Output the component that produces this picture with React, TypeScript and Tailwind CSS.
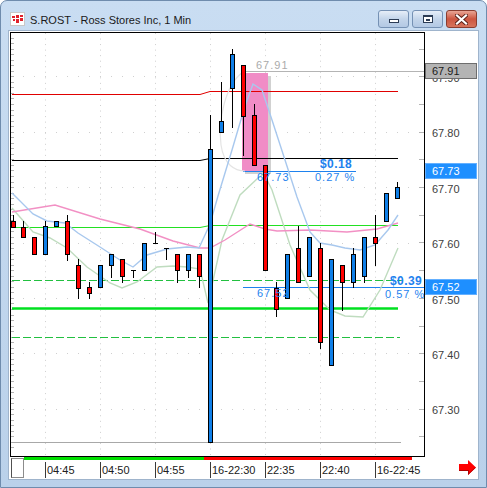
import React from "react";

const FONT = { fontFamily: '"Liberation Sans", Arial, sans-serif' };

// price -> y in page coordinates (scale read off the axis)
const py = (p: number) => 131.7 + (67.8 - p) * 554;

type Candle = { x: number; top: number; bot: number; wt?: number; wb?: number; c: "r" | "b" | "d" };

const candles: Candle[] = [
  { x: 11, top: 221, bot: 227, wt: 215, c: "r" },
  { x: 21, top: 227, bot: 237, wt: 221, c: "r" },
  { x: 32, top: 237, bot: 254, c: "r" },
  { x: 43, top: 226, bot: 254, wt: 221, c: "b" },
  { x: 54, top: 221, bot: 226, c: "b" },
  { x: 65, top: 221, bot: 254, wt: 215, wb: 260, c: "r" },
  { x: 76, top: 265, bot: 288, wt: 259, wb: 298, c: "r" },
  { x: 87, top: 287, bot: 293, wt: 282, wb: 298, c: "r" },
  { x: 98, top: 265, bot: 287, c: "b" },
  { x: 109, top: 254, bot: 265, wb: 277, c: "b" },
  { x: 120, top: 259, bot: 276, wb: 282, c: "r" },
  { x: 131, top: 270, bot: 270, wb: 277, c: "d" },
  { x: 142, top: 243, bot: 270, c: "b" },
  { x: 153, top: 243, bot: 243, wt: 232, c: "d" },
  { x: 164, top: 248, bot: 248, wb: 259, c: "d" },
  { x: 175, top: 254, bot: 270, wb: 282, c: "r" },
  { x: 186, top: 254, bot: 270, wb: 277, c: "b" },
  { x: 197, top: 254, bot: 276, wb: 287, c: "r" },
  { x: 208, top: 149, bot: 442, wt: 115, c: "b" },
  { x: 219, top: 121, bot: 132, wt: 82, c: "b" },
  { x: 230, top: 54, bot: 88, wt: 49, wb: 127, c: "b" },
  { x: 241, top: 65, bot: 116, wb: 155, c: "r" },
  { x: 252, top: 115, bot: 165, wt: 104, c: "r" },
  { x: 263, top: 165, bot: 270, c: "r" },
  { x: 274, top: 288, bot: 309, wt: 282, wb: 316, c: "r" },
  { x: 285, top: 254, bot: 298, c: "b" },
  { x: 296, top: 248, bot: 282, wt: 226, c: "r" },
  { x: 307, top: 237, bot: 276, c: "b" },
  { x: 318, top: 248, bot: 342, wt: 243, wb: 348, c: "r" },
  { x: 329, top: 259, bot: 365, c: "b" },
  { x: 340, top: 265, bot: 282, wb: 310, c: "r" },
  { x: 351, top: 254, bot: 282, wt: 248, wb: 287, c: "b" },
  { x: 362, top: 237, bot: 276, wb: 282, c: "b" },
  { x: 373, top: 237, bot: 243, wt: 215, wb: 265, c: "r" },
  { x: 384, top: 193, bot: 221, c: "b" },
  { x: 395, top: 187, bot: 198, wt: 182, c: "b" },
];

const lightBlue = [
  [12, 193], [33, 214], [47, 221], [65, 223], [78, 233], [100, 247], [120, 260], [133, 267],
  [147, 255], [167, 249], [187, 247], [199, 248], [210, 224], [218, 196], [232, 150], [245, 106],
  [253, 84], [262, 90], [272, 120], [285, 160], [297, 197], [310, 232], [320, 243], [332, 245],
  [345, 248], [360, 250], [375, 245], [388, 230], [398, 215],
];
const pink = [
  [12, 212], [55, 205], [100, 219], [140, 229], [173, 241], [200, 248], [210, 248], [225, 240],
  [250, 224], [265, 229], [277, 231], [310, 230], [347, 232], [377, 229], [398, 223],
];
const lightGreen = [
  [12, 208], [33, 232], [50, 238], [67, 248], [87, 267], [110, 283], [122, 288], [137, 282],
  [157, 267], [173, 266], [187, 267], [200, 269], [208, 303], [222, 240], [240, 195], [258, 178],
  [264, 174], [272, 190], [290, 245], [310, 290], [330, 310], [345, 316], [363, 317], [380, 290],
  [398, 248],
];

const pts = (a: number[][]) => a.map((p) => p.join(",")).join(" ");

const gridX = [45, 100, 155, 210, 265, 320, 375];
const gridY = [67.9, 67.8, 67.7, 67.6, 67.5, 67.4, 67.3].map(py);

function Chart() {
  const minor: number[] = [];
  for (let p = 67.99; p > 67.22; p -= 0.01) minor.push(py(p));
  const major: number[] = [];
  for (let p = 67.95; p > 67.22; p -= 0.05) major.push(py(p));

  return (
    <svg width={413} height={423} viewBox="11 33 413 423" className="block" style={FONT}>
      {/* dotted grid */}
      {gridX.map((x) => (
        <line key={x} x1={x + 0.5} x2={x + 0.5} y1={33} y2={455} stroke="#cfcfcf" strokeDasharray="1 4.54" />
      ))}
      {gridY.map((y) => (
        <line key={y} x1={12} x2={418} y1={Math.round(y) + 0.5} y2={Math.round(y) + 0.5} stroke="#cfcfcf" strokeDasharray="1 10" />
      ))}
      {minor.map((y) => (
        <line key={y} x1={11} x2={14} y1={Math.round(y) + 0.5} y2={Math.round(y) + 0.5} stroke="#b4b4b4" />
      ))}
      {major.map((y) => (
        <line key={y} x1={419} x2={424} y1={Math.round(y) + 0.5} y2={Math.round(y) + 0.5} stroke="#b4b4b4" />
      ))}

      {/* highlight box */}
      <rect x={245} y={76} width={26} height={98} fill="#000" opacity={0.18} />
      <rect x={242} y={73} width={26} height={98} fill="#f08cc6" />

      {/* level lines */}
      <polyline points="12,94.5 200,94.5 210,91.5 398,91.5" fill="none" stroke="#e00000" />
      <polyline points="12,160.5 200,160.5 210,158.5 398,158.5" fill="none" stroke="#000" />
      <polyline points="12,227.5 200,227.5 210,225.5 398,225.5" fill="none" stroke="#22e022" />
      <line x1={12} x2={402} y1={280.5} y2={280.5} stroke="#22c040" strokeDasharray="8 3" />
      <line x1={12} x2={398} y1={308.5} y2={308.5} stroke="#00e020" strokeWidth={2.5} />
      <line x1={12} x2={400} y1={337.5} y2={337.5} stroke="#22c040" strokeDasharray="8 3" />
      <line x1={12} x2={401} y1={442.5} y2={442.5} stroke="#a8a8a8" />
      <line x1={243} x2={424} y1={71.5} y2={71.5} stroke="#b4b4b4" />
      <line x1={243} x2={356} y1={171.5} y2={171.5} stroke="#1e82ee" />
      <line x1={243} x2={424} y1={287.5} y2={287.5} stroke="#1e82ee" />

      {/* moving averages */}
      <path d="M243,72 C225,85 218,120 221,145 C224,165 235,171 245,171" fill="none" stroke="#e4e4e4" strokeWidth={1.2} />
      <polyline points={pts(lightGreen)} fill="none" stroke="#bfdcbf" strokeWidth={1.4} />
      <polyline points={pts(pink)} fill="none" stroke="#f290c4" strokeWidth={1.4} />
      <polyline points={pts(lightBlue)} fill="none" stroke="#a8c8ee" strokeWidth={1.4} />

      {/* candles */}
      {candles.map((k) => {
        const cx = k.x + 2.5;
        const wt = k.wt ?? k.top;
        const wb = k.wb ?? k.bot;
        if (k.c === "d") {
          return (
            <g key={k.x} stroke="#000">
              <line x1={cx} x2={cx} y1={wt} y2={wb + 1} />
              <line x1={k.x} x2={k.x + 5} y1={k.top + 0.5} y2={k.top + 0.5} />
            </g>
          );
        }
        return (
          <g key={k.x}>
            <line x1={cx} x2={cx} y1={wt} y2={wb + 1} stroke="#000" />
            <rect
              x={k.x + 0.5}
              y={k.top + 0.5}
              width={4}
              height={k.bot - k.top}
              fill={k.c === "r" ? "#ff0000" : "#0f7fe8"}
              stroke="#000"
            />
          </g>
        );
      })}

      {/* annotations */}
      <text x={256} y={69} fontSize={11} fill="#ababab" letterSpacing={1}>67.91</text>
      <text x={320} y={168} fontSize={12} fontWeight={700} fill="#1e82ee" letterSpacing={0.4}>$0.18</text>
      <text x={257} y={181} fontSize={11} fill="#1e82ee" letterSpacing={1}>67.73</text>
      <text x={315} y={181} fontSize={11} fill="#1e82ee" letterSpacing={1}>0.27 %</text>
      <text x={257} y={297} fontSize={11} fill="#1e82ee" letterSpacing={1}>67.52</text>
      <text x={390} y={285} fontSize={12} fontWeight={700} fill="#1e82ee" letterSpacing={0.4}>$0.39</text>
      <text x={385} y={298} fontSize={11} fill="#1e82ee" letterSpacing={1}>0.57 %</text>
    </svg>
  );
}

function PriceAxis() {
  const labels = ["67.90", "67.80", "67.70", "67.60", "67.50", "67.40", "67.30"];
  const tags = [
    { t: "67.91", top: "top-[31px]", cls: "bg-[#b4b4b4] border-[#6e6e6e] text-[#1a1a1a]" },
    { t: "67.73", top: "top-[131px]", cls: "bg-[#1e8fff] border-[#64b0ff] text-white" },
    { t: "67.52", top: "top-[247px]", cls: "bg-[#1e8fff] border-[#64b0ff] text-white" },
  ];
  return (
    <div className="relative w-[53px] h-[425px] overflow-hidden text-[11px] text-[#404040]" style={FONT}>
      <div className="flex flex-col pt-[39px] pl-[7px]">
        {labels.map((l) => (
          <div key={l} className="h-[55.4px] leading-[14px] shrink-0">{l}</div>
        ))}
      </div>
      {tags.map((g) => (
        <div
          key={g.t}
          className={`absolute left-0 w-[52px] h-[16px] border pl-[6px] leading-[14px] ${g.top} ${g.cls}`}
        >
          {g.t}
        </div>
      ))}
    </div>
  );
}

function TimeAxis() {
  const labels = ["04:45", "04:50", "04:55", "16-22:30", "22:35", "22:40", "16-22:45"];
  return (
    <div className="flex h-[22px]">
      <div className="ml-[2px] mt-[1px] w-[13px] h-[20px] border border-[#8c8c8c] border-l-[#505050] bg-white" />
      <div className="flex flex-col">
        <div className="flex h-[3px]">
          <div className="w-[180px] bg-[#00e000]" />
          <div className="w-[208px] bg-[#ff0000]" />
        </div>
        <div className="flex ml-[21px] mt-[2px]" style={FONT}>
          {labels.map((l) => (
            <div
              key={l}
              className="w-[55px] h-[16px] border-l border-[#3a3a3a] pl-[1px] text-[11px] leading-[16px] text-[#202020]"
            >
              {l}
            </div>
          ))}
        </div>
      </div>
      <div className="ml-auto mr-[2px] mt-[3px]">
        <svg width={17} height={15} viewBox="0 0 17 15">
          <polygon points="0,4 9,4 9,0 17,7.5 9,15 9,11 0,11" fill="#ff0000" />
          <polygon points="0,11 9,11 9,15 17,7.5 16,7.5 10,13 10,10 0,10" fill="#b00000" />
        </svg>
      </div>
    </div>
  );
}

function TitleButton({ children, close }: { children: React.ReactNode; close?: boolean }) {
  return (
    <div
      className={
        close
          ? "w-[31px] h-[18px] rounded-[3px] border border-[#8a3d30] bg-linear-to-b from-[#e8a595] via-[#cc5540] to-[#d7745c] flex items-center justify-center"
          : "w-[31px] h-[18px] rounded-[3px] border border-[#7591b4] bg-linear-to-b from-[#e6eef8] via-[#c3d5ea] to-[#b3c9e4] flex items-center justify-center"
      }
    >
      {children}
    </div>
  );
}

function TitleBar() {
  return (
    <div className="h-[29px] flex items-start">
      <svg width={15} height={14} viewBox="0 0 15 14" className="mt-[11px] ml-[2px]">
        <rect x={0.5} y={0.5} width={14} height={13} fill="#fff" stroke="#c8c8c8" />
        <rect x={2} y={4} width={3} height={2} fill="#e0202a" />
        <rect x={3} y={7} width={2} height={2} fill="#e0202a" />
        <rect x={6} y={3} width={3} height={3} fill="#e0202a" />
        <rect x={6} y={7} width={3} height={4} fill="#e0202a" />
        <rect x={10} y={3} width={3} height={2} fill="#e0202a" />
        <rect x={10} y={6} width={3} height={3} fill="#e0202a" />
      </svg>
      <div className="ml-[5px] mt-[11px] text-[11px] leading-[16px] text-[#1a1a1a]" style={FONT}>
        S.ROST - Ross Stores Inc, 1 Min
      </div>
      <div className="ml-auto mr-[2px] mt-[9px] flex gap-[3px]">
        <TitleButton>
          <div className="mt-[4px] w-[10px] h-[4px] border border-[#2b3c55] bg-white" />
        </TitleButton>
        <TitleButton>
          <div className="w-[10px] h-[8px] border border-[#2b3c55] border-t-2 bg-white flex items-center justify-center">
            <div className="w-[4px] h-[2px] border border-[#2b3c55]" />
          </div>
        </TitleButton>
        <TitleButton close>
          <svg width={13} height={11} viewBox="0 0 13 11">
            <path d="M2,1.5 L11,9.5 M11,1.5 L2,9.5" stroke="#5a2018" strokeWidth={4} strokeLinecap="square" />
            <path d="M2,1.5 L11,9.5 M11,1.5 L2,9.5" stroke="#fff" strokeWidth={2.2} strokeLinecap="square" />
          </svg>
        </TitleButton>
      </div>
    </div>
  );
}

export default function App() {
  return (
    <div className="w-[487px] h-[488px] rounded-t-[7px] border border-[#6f8cad] bg-linear-to-b from-[#c9ddf2] to-[#bad1ea] px-[7px] pb-[7px] flex flex-col">
      <TitleBar />
      <div className="flex-1 border border-[#9fb4cc] bg-white flex flex-col">
        <div className="flex mt-[1px]">
          <div className="ml-[1px] w-[415px] h-[425px] border border-black">
            <Chart />
          </div>
          <PriceAxis />
        </div>
        <TimeAxis />
      </div>
    </div>
  );
}
